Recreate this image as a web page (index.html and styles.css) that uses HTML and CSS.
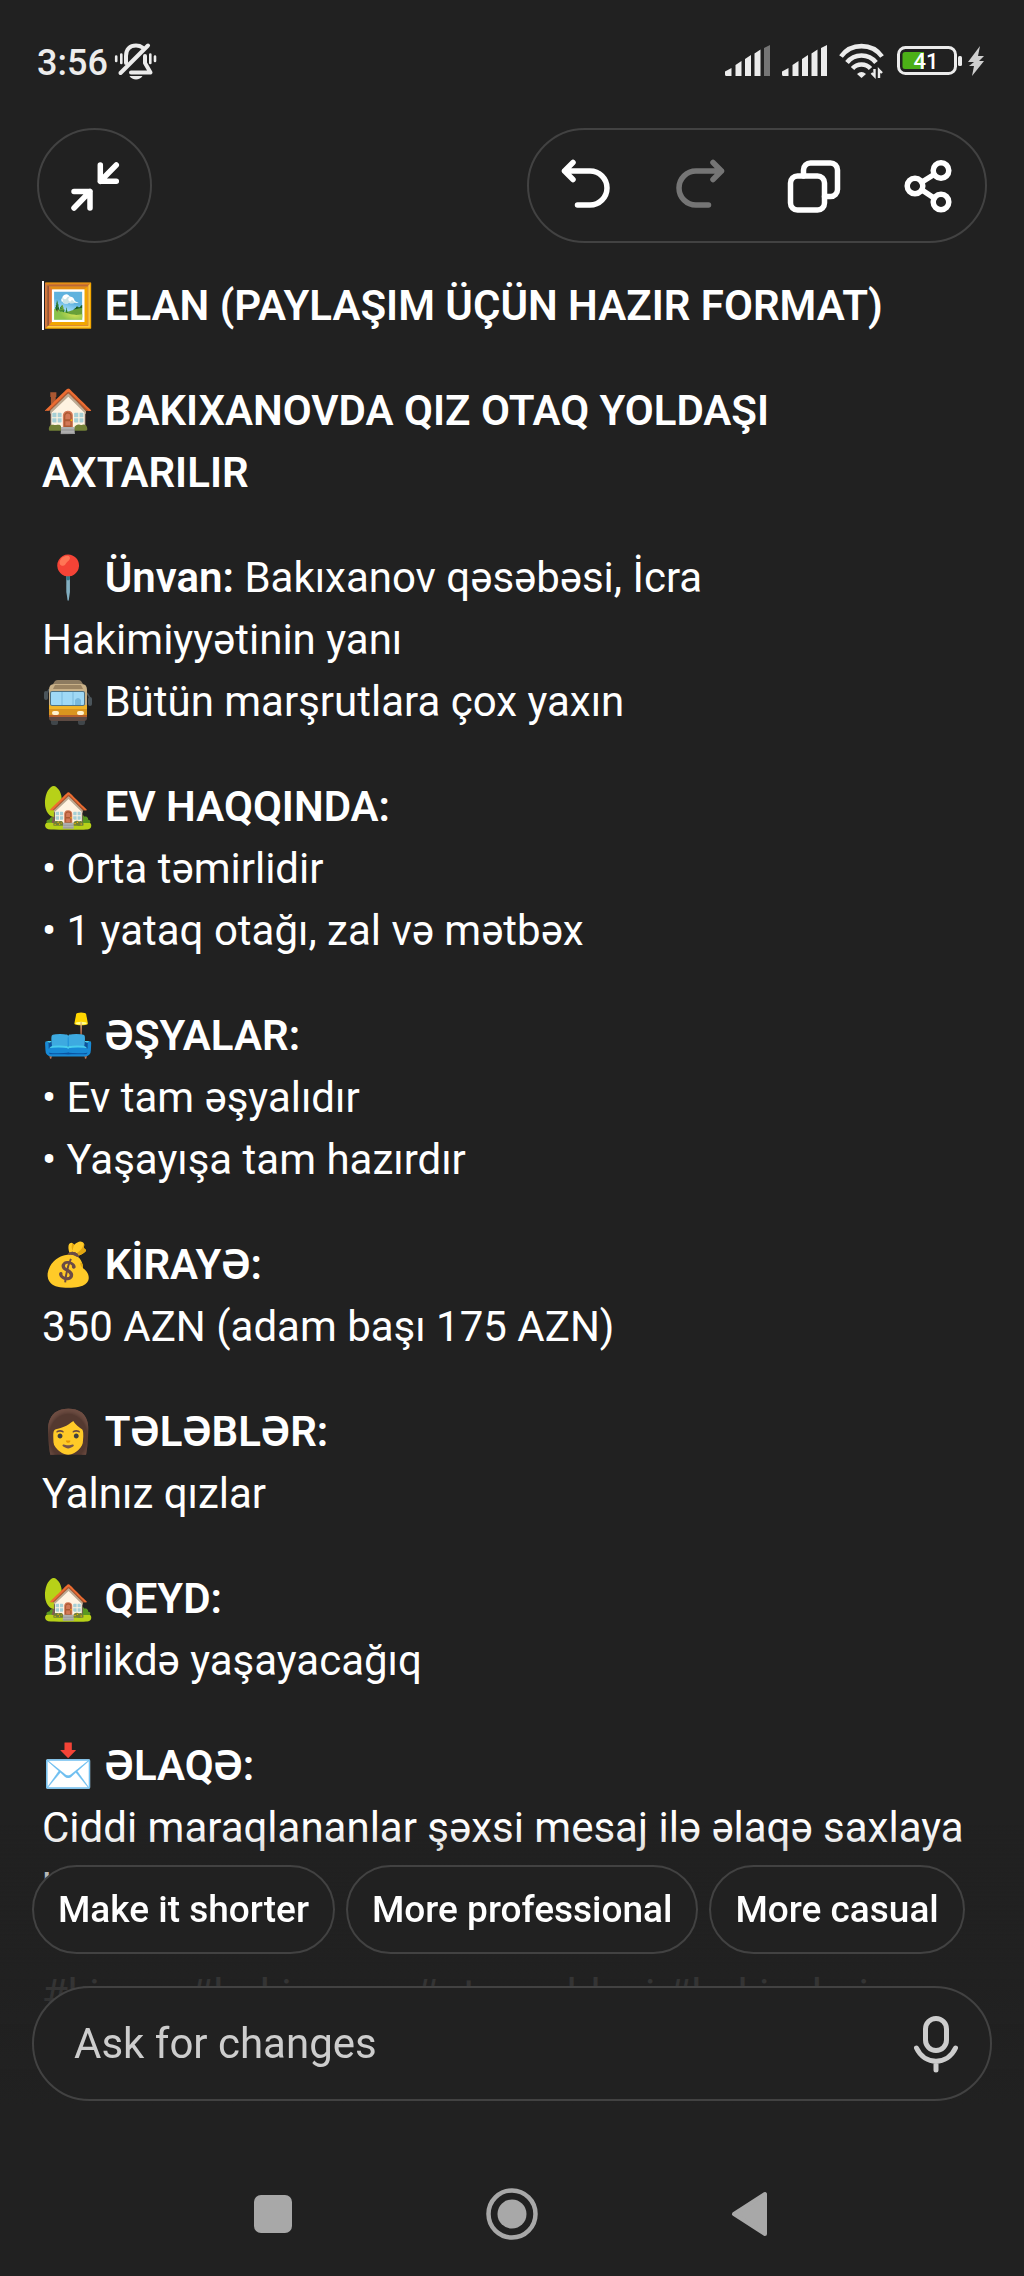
FILE: index.html
```html
<!DOCTYPE html>
<html lang="az">
<head>
  <meta charset="UTF-8" />
  <meta name="viewport" content="width=device-width, initial-scale=1.0" />
  <title>Elan</title>
  <link rel="stylesheet" href="styles.css">
</head>
<body>
  <header class="top">
    <div class="status-bar">
      <div class="status-left">
        <span class="clock">3:56</span>
        <svg width="44" height="38" viewBox="0 0 44 38" fill="none" stroke="#ececec" stroke-width="4" stroke-linecap="round" stroke-linejoin="round">
          <path d="M2.2 14.5v4.5M7.3 12.5v8.5M36.3 12.5v8.5M41 14.5v4.5" stroke-width="2.6" />
          <path d="M12 21v-7C12 7 16 3.500 22 3.500c2.500 0 4.500.5 6.500 2M31 14v7l5.500 9.500H17" />
          <path d="M34 3.500 6.500 31" />
          <path d="M15.500 34h13c-2.500 4.500-10.500 4.500-13 0z" fill="#ececec" stroke="none" />
        </svg>
      </div>
      <div class="status-right">
        <svg width="46" height="32" viewBox="0 0 46 32" fill="#ececec">
          <path d="M0 26.500 6.500 23v8H1.500Q0 31 0 29.500zM10.500 20l6-4v15h-6zM20 14l6-4v21h-6zM29.500 8.500l6-4V31h-6z" />
          <path d="M39 3l6-3v31h-6z" fill="#757575" />
        </svg>
        <svg width="46" height="32" viewBox="0 0 46 32" fill="#ececec">
          <path d="M0 26.500 6.500 23v8H1.500Q0 31 0 29.500zM10.500 20l6-4v15h-6zM20 14l6-4v21h-6zM29.500 8.500l6-4V31h-6zM39 3l6-3v31h-6z" />
        </svg>
        <svg width="46" height="36" viewBox="0 0 46 36" fill="none" stroke="#ececec" stroke-width="4.600">
          <path d="M2 13.500a25.500 25.500 0 0 1 41 0M8 19.500a18.500 18.500 0 0 1 29 0M13.500 25.500a12 12 0 0 1 18 0" />
          <path d="M18 31q4.500-4 9 0l-4.500 4z" fill="#ececec" stroke="none" />
          <path d="M35.500 26v7l-3-3M40 35v-8l3 3" stroke-width="2.400" />
        </svg>
        <svg width="91" height="32" viewBox="0 0 91 32">
          <rect x="2.500" y="2.500" width="57" height="26" rx="7" fill="none" stroke="#ececec" stroke-width="3" />
          <path d="M9 7h19v17H9a2.500 2.500 0 0 1-2.500-2.500v-12A2.500 2.500 0 0 1 9 7z" fill="#4caf17" />
          <rect x="62" y="11" width="4" height="10" rx="1.500" fill="#ececec" />
          <text x="30" y="23.500" class="battery-text">41</text>
          <path d="M84 1 72 17h6l-5 4h5l-2 10 12-15h-5l5-5h-6z" fill="#cfcfcf" />
        </svg>
      </div>
    </div>

    <div class="toolbar">
      <button class="round-btn" type="button" aria-label="Collapse">
        <svg class="icon" viewBox="0 0 56 56"><path d="M33.300 7v16.300h16M49.300 7l-16 16.300M7 33.500h16V50M7 50l16-16.500" /></svg>
      </button>
      <div class="tool-group">
        <button class="tool-btn" type="button" aria-label="Undo">
          <svg class="icon" viewBox="0 0 56 56"><path d="M15 4.500 6.500 13l8.500 8.500M6.500 13H32a17 17 0 0 1 0 34H19.500" /></svg>
        </button>
        <button class="tool-btn" type="button" aria-label="Redo" disabled>
          <svg class="icon" viewBox="0 0 56 56"><path d="M41 4.500 49.500 13 41 21.500M49.500 13H24a17 17 0 0 0 0 34h12.500" /></svg>
        </button>
        <button class="tool-btn" type="button" aria-label="Copy">
          <svg class="icon" viewBox="0 0 56 56"><rect x="4.500" y="18" width="34" height="34" rx="7" /><path d="M17.500 18v-6a7 7 0 0 1 7-7h20a7 7 0 0 1 7 7v19.500a7 7 0 0 1-7 7h-6" /></svg>
        </button>
        <button class="tool-btn" type="button" aria-label="Share">
          <svg class="icon" viewBox="0 0 56 56"><circle cx="15" cy="28" r="7.800" /><circle cx="41" cy="12.500" r="7.800" /><circle cx="41" cy="44" r="7.800" /><path d="m22 24 12-7.500M22 32l12 8" /></svg>
        </button>
      </div>
    </div>
  </header>

  <main class="document">
    <p><span class="caret"></span><strong>🖼️ ELAN (PAYLAŞIM ÜÇÜN HAZIR FORMAT)</strong></p>
    <p><strong>🏠 BAKIXANOVDA QIZ OTAQ YOLDAŞI AXTARILIR</strong></p>
    <p>📍 <strong>Ünvan:</strong> Bakıxanov qəsəbəsi, İcra<br>Hakimiyyətinin yanı<br><svg class="bus" viewBox="0 8 52 48" role="img" aria-label="Avtobus">
        <path d="M11 14l2-3q1-1 3-1h20q2 0 3 1l2 3z" fill="#8d7b60" />
        <rect x="2" y="21" width="4" height="9" rx="2" fill="#4b555b" />
        <rect x="46" y="27" width="4" height="9" rx="2" fill="#4b555b" />
        <path d="M5 24l2-5M45 23l3 5" stroke="#4b555b" stroke-width="1.500" />
        <rect x="9" y="48" width="7" height="7" rx="2" fill="#40464a" />
        <rect x="36" y="48" width="7" height="7" rx="2" fill="#40464a" />
        <path d="M7 20q0-6 5-6h28q5 0 5 6v20H7z" fill="#c9b188" />
        <path d="M13 15h26l2 4H11z" fill="#9b8462" />
        <path d="M7 35h38v9H7z" fill="#f0b429" />
        <rect x="7" y="39" width="38" height="6" fill="#d9951f" />
        <path d="M7 45h38v3q0 3-3 3H10q-3 0-3-3z" fill="#5d4a42" />
        <rect x="7" y="45" width="38" height="2" fill="#b5602c" />
        <rect x="8" y="21" width="35" height="15" rx="2" fill="#4f7487" />
        <rect x="9" y="22" width="33" height="13" rx="1" fill="#9fd9f6" />
        <path d="M20 22v13M31 22v13" stroke="#79b9dd" stroke-width="1" />
        <path d="M33 35v-5q3-4 6 0v5z" fill="#79b9dd" />
        <rect x="10" y="41" width="7" height="4" rx="2" fill="#fff3cf" />
        <rect x="35" y="41" width="7" height="4" rx="2" fill="#fff3cf" />
      </svg> Bütün marşrutlara çox yaxın</p>
    <p>🏡 <strong>EV HAQQINDA:</strong><br>• Orta təmirlidir<br>• 1 yataq otağı, zal və mətbəx</p>
    <p>🛋️ <strong>ƏŞYALAR:</strong><br>• Ev tam əşyalıdır<br>• Yaşayışa tam hazırdır</p>
    <p>💰 <strong>KİRAYƏ:</strong><br>350 AZN (adam başı 175 AZN)</p>
    <p>👩 <strong>TƏLƏBLƏR:</strong><br>Yalnız qızlar</p>
    <p>🏡 <strong>QEYD:</strong><br>Birlikdə yaşayacağıq</p>
    <p>📩 <strong>ƏLAQƏ:</strong><br>Ciddi maraqlananlar şəxsi mesaj ilə əlaqə saxlaya bilər.</p>
    <p>#kiraye #bakixanov #otaqyoldasi #bakievleri</p>
  </main>

  <footer class="bottom">
    <div class="chips">
      <button class="chip" type="button">Make it shorter</button>
      <button class="chip" type="button">More professional</button>
      <button class="chip" type="button">More casual</button>
    </div>
    <form class="ask">
      <input class="ask-input" type="text" placeholder="Ask for changes" aria-label="Ask for changes">
      <button class="mic-btn" type="button" aria-label="Voice input">
        <svg class="mic" viewBox="0 0 56 60"><rect x="17.500" y="4.500" width="21" height="32" rx="10.500" /><path d="M8.500 34c8 17.500 31 17.500 39 0M28 47.500V56" /></svg>
      </button>
    </form>
    <nav class="nav-bar">
      <button type="button" aria-label="Recents"><svg width="54" height="54" viewBox="0 0 54 54"><rect x="8" y="8" width="38" height="38" rx="7" fill="#a8a8a8" /></svg></button>
      <button type="button" aria-label="Home"><svg width="54" height="54" viewBox="0 0 54 54"><circle cx="27" cy="27" r="23.500" fill="none" stroke="#a8a8a8" stroke-width="4.500" /><circle cx="27" cy="27" r="14.500" fill="#a8a8a8" /></svg></button>
      <button type="button" aria-label="Back"><svg width="54" height="54" viewBox="0 0 54 54"><path d="M10 27 41 7v40z" fill="#a8a8a8" stroke="#a8a8a8" stroke-width="4" stroke-linejoin="round" /></svg></button>
    </nav>
  </footer>
</body>
</html>
```
FILE: styles.css
```css
* {
  box-sizing: border-box;
}
body {
  margin: 0;
  min-height: 100vh;
  background-color: #212121;
  color: #fff;
  font-family: Roboto, "Noto Color Emoji", sans-serif;
  font-size: 42px;
}
button {
  display: flex;
  align-items: center;
  justify-content: center;
  margin: 0;
  padding: 0;
  border: none;
  background: none;
  color: inherit;
  font-family: inherit;
  cursor: pointer;
}
svg {
  display: block;
}

/* status bar */
.status-bar {
  display: flex;
  justify-content: space-between;
  align-items: center;
  height: 40px;
  margin: 41px 37px 47px;
}
.status-left {
  display: flex;
  align-items: center;
  gap: 6px;
}
.clock {
  padding-top: 4px;
  font-size: 36px;
  font-weight: 500;
  line-height: 40px;
  color: #ececec;
}
.status-right {
  display: flex;
  align-items: center;
  gap: 11px;
}
.battery-text {
  font-size: 22px;
  font-weight: 500;
  text-anchor: middle;
  fill: #fff;
}

/* toolbar */
.toolbar {
  display: flex;
  justify-content: space-between;
  padding: 0 37px;
}
.round-btn,
.tool-group {
  height: 115px;
  border: 2px solid #424242;
  border-radius: 58px;
}
.round-btn {
  width: 115px;
}
.tool-group {
  display: flex;
}
.tool-btn {
  width: 114px;
}
.tool-btn:disabled {
  color: #757575;
  cursor: default;
}
.icon {
  width: 56px;
  height: 56px;
  fill: none;
  stroke: currentColor;
  stroke-width: 5.5;
  stroke-linecap: round;
  stroke-linejoin: round;
}

/* text */
.document {
  padding: 32px 42px 0;
  line-height: 62px;
}
.document p {
  position: relative;
  margin: 0 0 43px;
}
.document strong {
  font-weight: 600;
}
.bus {
  display: inline-block;
  width: 52px;
  height: 48px;
  vertical-align: -10px;
}
.caret {
  position: absolute;
  top: 6px;
  left: 0;
  width: 2px;
  height: 49px;
  background-color: #fff;
}

/* bottom panel lies over the end of the text */
.bottom {
  position: fixed;
  left: 0;
  right: 0;
  bottom: 0;
  padding-top: 40px;
  background: linear-gradient(rgba(33, 33, 33, 0), rgba(33, 33, 33, 0.9) 140px, #212121 280px);
}
.chips {
  display: flex;
  gap: 11px;
  padding: 0 32px;
  margin-bottom: 32px;
}
.chip {
  height: 89px;
  padding: 0 24px;
  border: 2px solid #424242;
  border-radius: 45px;
  background-color: #212121;
  font-size: 37px;
  font-weight: 500;
  white-space: nowrap;
}
.ask {
  display: flex;
  align-items: center;
  height: 115px;
  margin: 0 32px;
  padding: 0 26px 0 40px;
  border: 2px solid #424242;
  border-radius: 58px;
  background-color: #212121;
}
.ask-input {
  flex: 1;
  min-width: 0;
  padding: 0;
  border: none;
  outline: none;
  background: none;
  color: #fff;
  font-family: inherit;
  font-size: 42px;
}
.ask-input::placeholder {
  color: #cdcdcd;
  opacity: 1;
}
.mic {
  width: 56px;
  height: 60px;
  fill: none;
  stroke: #cdcdcd;
  stroke-width: 5;
  stroke-linecap: round;
}
.nav-bar {
  display: grid;
  grid-template-columns: repeat(3, 1fr);
  height: 124px;
  margin-top: 51px;
  padding: 0 15%;
}
```
